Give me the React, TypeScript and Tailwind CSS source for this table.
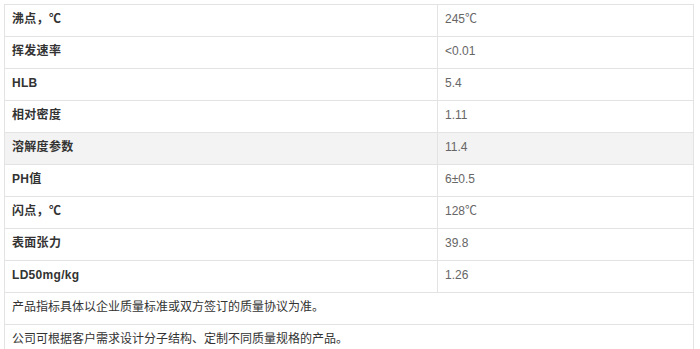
import React from "react";

const rows: [string, string][] = [
  ["沸点，℃", "245℃"],
  ["挥发速率", "<0.01"],
  ["HLB", "5.4"],
  ["相对密度", "1.11"],
  ["溶解度参数", "11.4"],
  ["PH值", "6±0.5"],
  ["闪点，℃", "128℃"],
  ["表面张力", "39.8"],
  ["LD50mg/kg", "1.26"],
];

const notes = [
  "产品指标具体以企业质量标准或双方签订的质量协议为准。",
  "公司可根据客户需求设计分子结构、定制不同质量规格的产品。",
];

const font = {
  fontFamily: '"Liberation Sans", "Noto Sans CJK SC", Arial, sans-serif',
};

export default function App() {
  return (
    <div className="bg-white w-[700px] h-[349px] overflow-hidden pt-[4px] pl-[4px]" style={font}>
      <div className="w-[690px] border-t border-l border-r border-[#e3e3e3] text-[12px]">
        {rows.map(([k, v], i) => (
          <div
            key={k}
            className={`flex h-[32px] border-b border-[#e3e3e3] ${i === 4 ? "bg-[#f3f3f3]" : "bg-white"}`}
          >
            <div className="w-[433px] border-r border-[#e3e3e3] flex items-center pl-[7px] pb-[4px] font-bold text-[#333] tracking-[0.3px]">
              {k}
            </div>
            <div className="flex-1 flex items-center pl-[7px] pb-[4px] text-[#666]">{v}</div>
          </div>
        ))}
        {notes.map((n) => (
          <div key={n} className="flex h-[32px] border-b border-[#e3e3e3] items-center pl-[7px] pb-[4px] text-[#333]">
            {n}
          </div>
        ))}
      </div>
    </div>
  );
}
